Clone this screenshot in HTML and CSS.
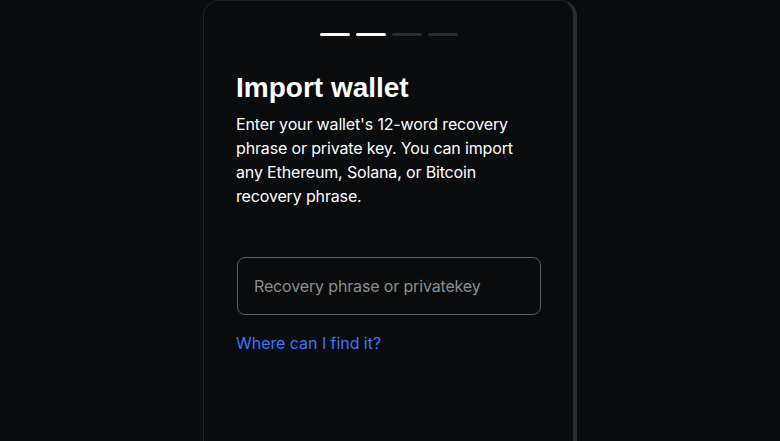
FILE: index.html
```html
<!DOCTYPE html>
<html lang="en">
<head>
<meta charset="utf-8">
<title>Import wallet</title>
<link rel="stylesheet" href="styles.css">
</head>
<body>
<div class="page">
  <main class="card">
    <div class="steps">
      <span class="step active"></span>
      <span class="step active"></span>
      <span class="step"></span>
      <span class="step"></span>
    </div>
    <h1 class="title">Import wallet</h1>
    <p class="desc">Enter your wallet's 12-word recovery phrase or private key. You can import any Ethereum, Solana, or Bitcoin recovery phrase.</p>
    <div class="field">
      <input class="input" type="text" placeholder="Recovery phrase or privatekey">
    </div>
    <a class="link" href="#">Where can I find it?</a>
  </main>
</div>
</body>
</html>
```
FILE: styles.css
```css
html, body {
  margin: 0;
  padding: 0;
  background: #0a0b0d;
  height: 100%;
  overflow: hidden;
}
.page {
  display: flex;
  justify-content: center;
  height: 100%;
}
.card {
  box-sizing: border-box;
  width: 374px;
  height: 460px;
  border: 1px solid #1f2024;
  border-right: 4px solid #2b2c30;
  border-radius: 16px;
  padding: 32px 32px 0 32px;
  font-family: Inter, "Noto Sans", sans-serif;
}
.steps {
  display: flex;
  justify-content: center;
  gap: 6px;
  padding-left: 1px;
}
.step {
  width: 30px;
  height: 3px;
  border-radius: 2px;
  background: #2a2b2f;
}
.step.active {
  background: #ffffff;
}
.title {
  margin: 34px 0 0 0;
  font-family: "Liberation Sans", Arial, sans-serif;
  font-weight: 700;
  font-size: 28px;
  line-height: 36px;
  color: #ffffff;
}
.desc {
  margin: 6px 0 0 0;
  font-size: 16px;
  line-height: 24px;
  letter-spacing: -0.15px;
  color: #ffffff;
  width: 290px;
}
.field {
  margin-top: 49px;
  padding-left: 1px;
}
.input {
  box-sizing: border-box;
  width: 304px;
  height: 58px;
  border: 1px solid #5b5e66;
  border-radius: 8px;
  background: transparent;
  padding: 0 16px;
  font-family: Inter, "Noto Sans", sans-serif;
  font-size: 16px;
  letter-spacing: -0.15px;
  color: #ffffff;
  outline: none;
}
.input::placeholder {
  color: #8a8d94;
}
.link {
  display: inline-block;
  margin-top: 16px;
  font-size: 16px;
  line-height: 24px;
  letter-spacing: -0.05px;
  color: #3b76f6;
  text-decoration: none;
}
```
